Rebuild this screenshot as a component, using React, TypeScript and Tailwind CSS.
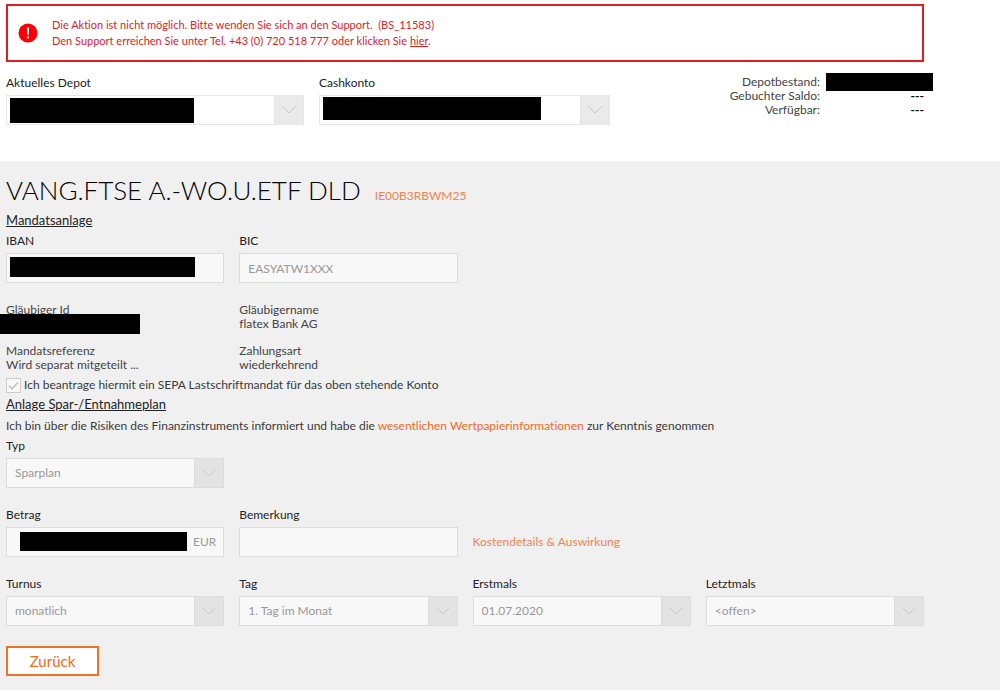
import { type ReactNode } from 'react'
import clsx from 'clsx'

const fieldBox = 'h-[30px] w-full rounded-none border border-[#dcdcdc] bg-[#f8f8f8] px-2 text-[12px] text-[#999999] opacity-100'

function Field({ id, label, children }: { id: string; label: string; children: ReactNode }) {
  return (
    <div>
      <label htmlFor={id} className="mb-1 block leading-4 text-[#222222]">
        {label}
      </label>
      <div className="relative">{children}</div>
    </div>
  )
}

function SelectField({
  id,
  label,
  value,
  light,
  children,
}: {
  id: string
  label: string
  value: string
  light?: boolean
  children?: ReactNode
}) {
  return (
    <Field id={id} label={label}>
      <select id={id} disabled className={clsx(fieldBox, 'appearance-none pr-8', light && 'border-[#e6e6e6] bg-white')}>
        <option>{value}</option>
      </select>
      <span
        className={clsx(
          'pointer-events-none absolute inset-y-0 right-0 flex w-[30px] items-center justify-center border',
          light ? 'border-[#e6e6e6] bg-[#eaeaea]' : 'border-[#dcdcdc] bg-[#e3e3e3]',
        )}
      >
        <svg width="14" height="8" viewBox="0 0 14 8" fill="none" stroke="#c6c6c6" strokeWidth="1">
          <path d="M0.5 0.5 L7 7 L13.5 0.5" />
        </svg>
      </span>
      {children}
    </Field>
  )
}

function Info({ label, children }: { label: string; children?: ReactNode }) {
  return (
    <dl className="relative leading-[14px] text-[#444444]">
      <dt>{label}</dt>
      <dd className="min-h-[14px]">{children}</dd>
    </dl>
  )
}

export default function App() {
  return (
    <div className="bg-white font-['Lato',sans-serif] text-[12px] text-[#3a3a3a] [font-variant-ligatures:none]">
      <header className="max-w-[924px] pt-1 pb-9 pl-[6px]">
        <div role="alert" className="flex items-center gap-[14px] border-2 border-[#dc1e24] py-[11px] pl-[10px] text-[11px] leading-4 text-[#d8232a]">
          <svg width="20" height="20" viewBox="0 0 20 20" className="shrink-0">
            <circle cx="10" cy="10" r="9.5" fill="#fb0007" />
            <path d="M8.9 4.4 H11.1 L10.7 12 H9.3 Z" fill="#fff" />
            <circle cx="10" cy="14.4" r="1.1" fill="#fff" />
          </svg>
          <div>
            <p>Die Aktion ist nicht möglich. Bitte wenden Sie sich an den Support.&nbsp; (BS_11583)</p>
            <p>
              Den Support erreichen Sie unter Tel. +43 (0) 720 518 777 oder klicken Sie{' '}
              <a href="#support" className="underline">
                hier
              </a>
              .
            </p>
          </div>
        </div>

        <div className="mt-[13px] grid grid-cols-[298fr_291fr_299fr] gap-[15px]">
          <SelectField id="depot" label="Aktuelles Depot" value="" light>
            <span className="absolute top-[3px] left-1 h-[25px] w-[184px] bg-black" />
          </SelectField>
          <SelectField id="cashkonto" label="Cashkonto" value="" light>
            <span className="absolute top-[2px] left-1 h-[23px] w-[218px] bg-black" />
          </SelectField>
          <dl className="relative grid grid-cols-[1fr_98px] gap-x-[6px] self-start text-right leading-[14px] text-[#444444]">
            <dt>Depotbestand:</dt>
            <dd>
              <span className="absolute top-[-2px] right-[-9px] h-[18px] w-[107px] bg-black" />
            </dd>
            <dt>Gebuchter Saldo:</dt>
            <dd className="font-bold text-black">---</dd>
            <dt>Verfügbar:</dt>
            <dd className="font-bold text-black">---</dd>
          </dl>
        </div>
      </header>

      <main className="border-b-2 border-white bg-[#f0f0f0] pt-[11px] pb-[14px]">
        <form className="max-w-[924px] pl-[6px]">
          <div className="mb-0.5 flex items-baseline gap-[14px]">
            <h1 className="text-[26px] leading-9 font-light text-black">VANG.FTSE A.-WO.U.ETF DLD</h1>
            <span className="text-[#ef8354]">IE00B3RBWM25</span>
          </div>

          <h2 className="mb-[3px] text-[13px] leading-5 text-[#222222] underline">Mandatsanlage</h2>
          <div className="grid grid-cols-4 gap-[15px]">
            <Field id="iban" label="IBAN">
              <input id="iban" disabled className={fieldBox} />
              <span className="absolute top-1 left-1 h-5 w-[185px] bg-black" />
            </Field>
            <Field id="bic" label="BIC">
              <input id="bic" disabled value="EASYATW1XXX" className={fieldBox} />
            </Field>
          </div>

          {/* two columns, aligned with the first half of the field grid */}
          <div className="mt-5 grid grid-cols-4 gap-x-[15px] gap-y-[13px]">
            <Info label="Gläubiger Id">
              <span className="absolute top-[11px] left-[-6px] h-5 w-[140px] bg-black" />
            </Info>
            <div className="col-span-3">
              <Info label="Gläubigername">flatex Bank AG</Info>
            </div>
            <Info label="Mandatsreferenz">Wird separat mitgeteilt ...</Info>
            <div className="col-span-3">
              <Info label="Zahlungsart">wiederkehrend</Info>
            </div>
          </div>

          <div className="mt-1 flex items-center gap-[3px]">
            <span className="relative flex">
              <input
                id="sepa"
                type="checkbox"
                checked
                disabled
                className="h-[15px] w-[15px] appearance-none border border-[#cccccc] bg-[#f8f8f8]"
              />
              <svg
                width="15"
                height="15"
                viewBox="0 0 15 15"
                fill="none"
                stroke="#c0c0c0"
                strokeWidth="1.5"
                className="pointer-events-none absolute inset-0"
              >
                <path d="M3 7.8 L6 10.8 L12 4.4" />
              </svg>
            </span>
            <label htmlFor="sepa">Ich beantrage hiermit ein SEPA Lastschriftmandat für das oben stehende Konto</label>
          </div>

          <h2 className="text-[13px] leading-5 text-[#222222] underline">Anlage Spar-/Entnahmeplan</h2>
          <p className="my-1 leading-4">
            Ich bin über die Risiken des Finanzinstruments informiert und habe die{' '}
            <a href="#kiid" className="text-[#f26a1b]">
              wesentlichen Wertpapierinformationen
            </a>{' '}
            zur Kenntnis genommen
          </p>

          <div className="grid grid-cols-4 gap-x-[15px] gap-y-[19px]">
            <div className="col-span-4 grid grid-cols-4 gap-[15px]">
              <SelectField id="typ" label="Typ" value="Sparplan" />
            </div>

            <Field id="betrag" label="Betrag">
              <input id="betrag" disabled className={fieldBox} />
              <span className="absolute inset-y-0 right-2 flex items-center text-[#999999]">EUR</span>
              <span className="absolute top-[5px] left-[14px] h-[19px] w-[167px] bg-black" />
            </Field>
            <Field id="bemerkung" label="Bemerkung">
              <input id="bemerkung" disabled className={fieldBox} />
            </Field>
            <a href="#kosten" className="col-span-2 self-end leading-[30px] text-[#ef8354]">
              Kostendetails &amp; Auswirkung
            </a>

            <SelectField id="turnus" label="Turnus" value="monatlich" />
            <SelectField id="tag" label="Tag" value="1. Tag im Monat" />
            <SelectField id="erstmals" label="Erstmals" value="01.07.2020" />
            <SelectField id="letztmals" label="Letztmals" value="<offen>" />
          </div>

          <button type="button" className="mt-5 h-[30px] w-[93px] border-2 border-[#ec7523] bg-white text-[15px] text-[#f26a1b]">
            Zurück
          </button>
        </form>
      </main>
    </div>
  )
}
